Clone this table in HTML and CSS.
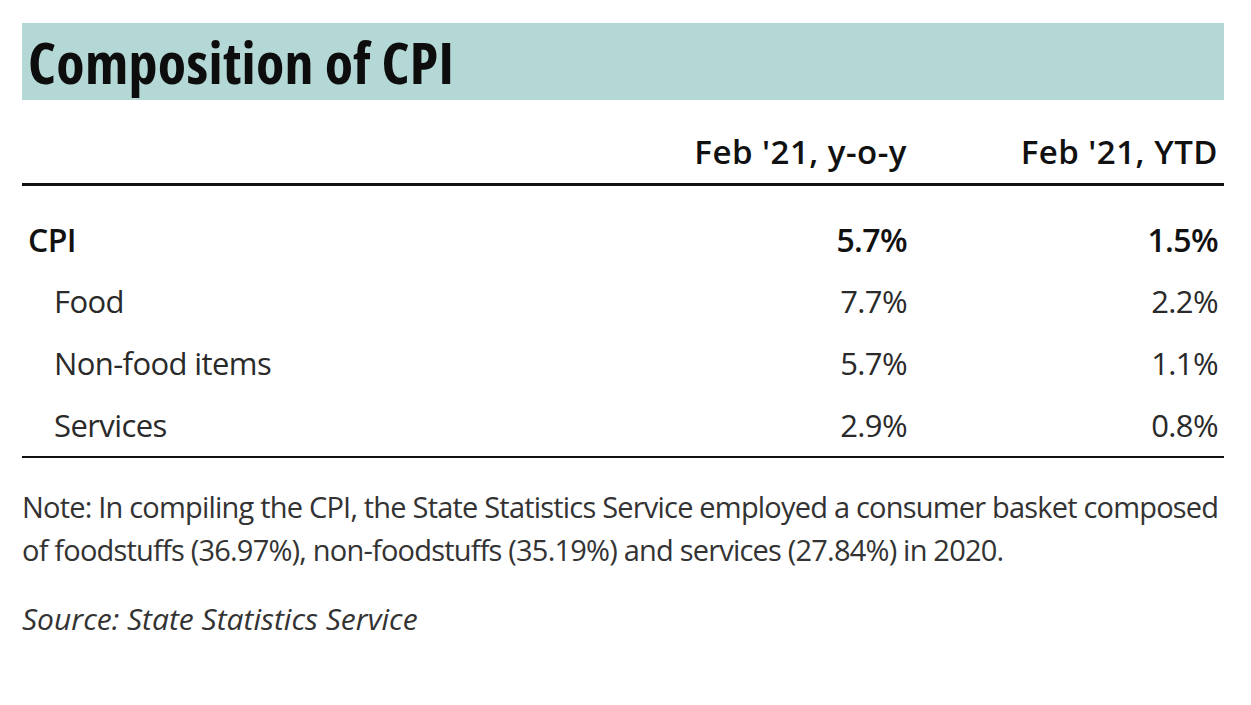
FILE: index.html
```html
<!DOCTYPE html>
<html lang="en">
<head>
<meta charset="utf-8">
<title>Composition of CPI</title>
<link rel="stylesheet" href="styles.css">
</head>
<body>
<div class="panel">
  <div class="title-band"><h1 class="title">Composition of CPI</h1></div>
  <div class="table">
    <div class="row head">
      <div class="cell label"></div>
      <div class="cell num">Feb '21, y-o-y</div>
      <div class="cell num last">Feb '21, YTD</div>
    </div>
    <div class="body">
      <div class="row total">
        <div class="cell label">CPI</div>
        <div class="cell num">5.7%</div>
        <div class="cell num last">1.5%</div>
      </div>
      <div class="row sub">
        <div class="cell label">Food</div>
        <div class="cell num">7.7%</div>
        <div class="cell num last">2.2%</div>
      </div>
      <div class="row sub">
        <div class="cell label">Non-food items</div>
        <div class="cell num">5.7%</div>
        <div class="cell num last">1.1%</div>
      </div>
      <div class="row sub">
        <div class="cell label">Services</div>
        <div class="cell num">2.9%</div>
        <div class="cell num last">0.8%</div>
      </div>
    </div>
  </div>
  <p class="note">Note: In compiling the CPI, the State Statistics Service employed a consumer basket composed<br>of foodstuffs (36.97%), non-foodstuffs (35.19%) and services (27.84%) in 2020.</p>
  <p class="source">Source: State Statistics Service</p>
</div>
</body>
</html>
```

FILE: styles.css
```css
html, body {
  margin: 0;
  padding: 0;
  background: #ffffff;
}

body {
  font-family: "Open Sans", "Noto Sans", sans-serif;
  color: #1a1a1a;
}

.panel {
  width: 1202px;
  padding: 23px 0 0 22px;
}

.title-band {
  height: 77px;
  background: #b3d8d6;
  display: flex;
  align-items: center;
  padding-left: 6px;
}

.title {
  margin: 0;
  font-size: 58px;
  font-weight: 700;
  font-stretch: 87.5%;
  letter-spacing: 0.3px;
  color: #0d0d0d;
  line-height: 1;
}

.row {
  display: grid;
  grid-template-columns: 1fr 300px 317px;
  align-items: center;
}

.cell {
  white-space: nowrap;
  font-size: 31px;
  letter-spacing: -0.6px;
}

.num {
  text-align: right;
}

.num.last {
  padding-right: 6px;
}

.head {
  height: 83px;
  align-items: end;
}

.head .cell {
  font-weight: 650;
  font-size: 33px;
  letter-spacing: 0.5px;
  line-height: 1;
  padding-bottom: 15px;
  color: #111;
}

.body {
  border-top: 3px solid #111;
  border-bottom: 2px solid #111;
  padding-top: 22px;
}

.body .row {
  height: 62px;
}

.total .cell {
  font-weight: 650;
  font-size: 32px;
  color: #111;
}

.total .label {
  padding-left: 6px;
}

.sub .cell {
  color: #2a2a2a;
}

.sub .label {
  padding-left: 32px;
}

.note {
  margin: 27px 0 0 0;
  font-size: 29px;
  line-height: 43px;
  letter-spacing: -0.8px;
  color: #333;
  white-space: nowrap;
}

.source {
  margin: 26px 0 0 0;
  font-size: 30px;
  line-height: 43px;
  font-style: italic;
  letter-spacing: 0;
  color: #333;
}
```
